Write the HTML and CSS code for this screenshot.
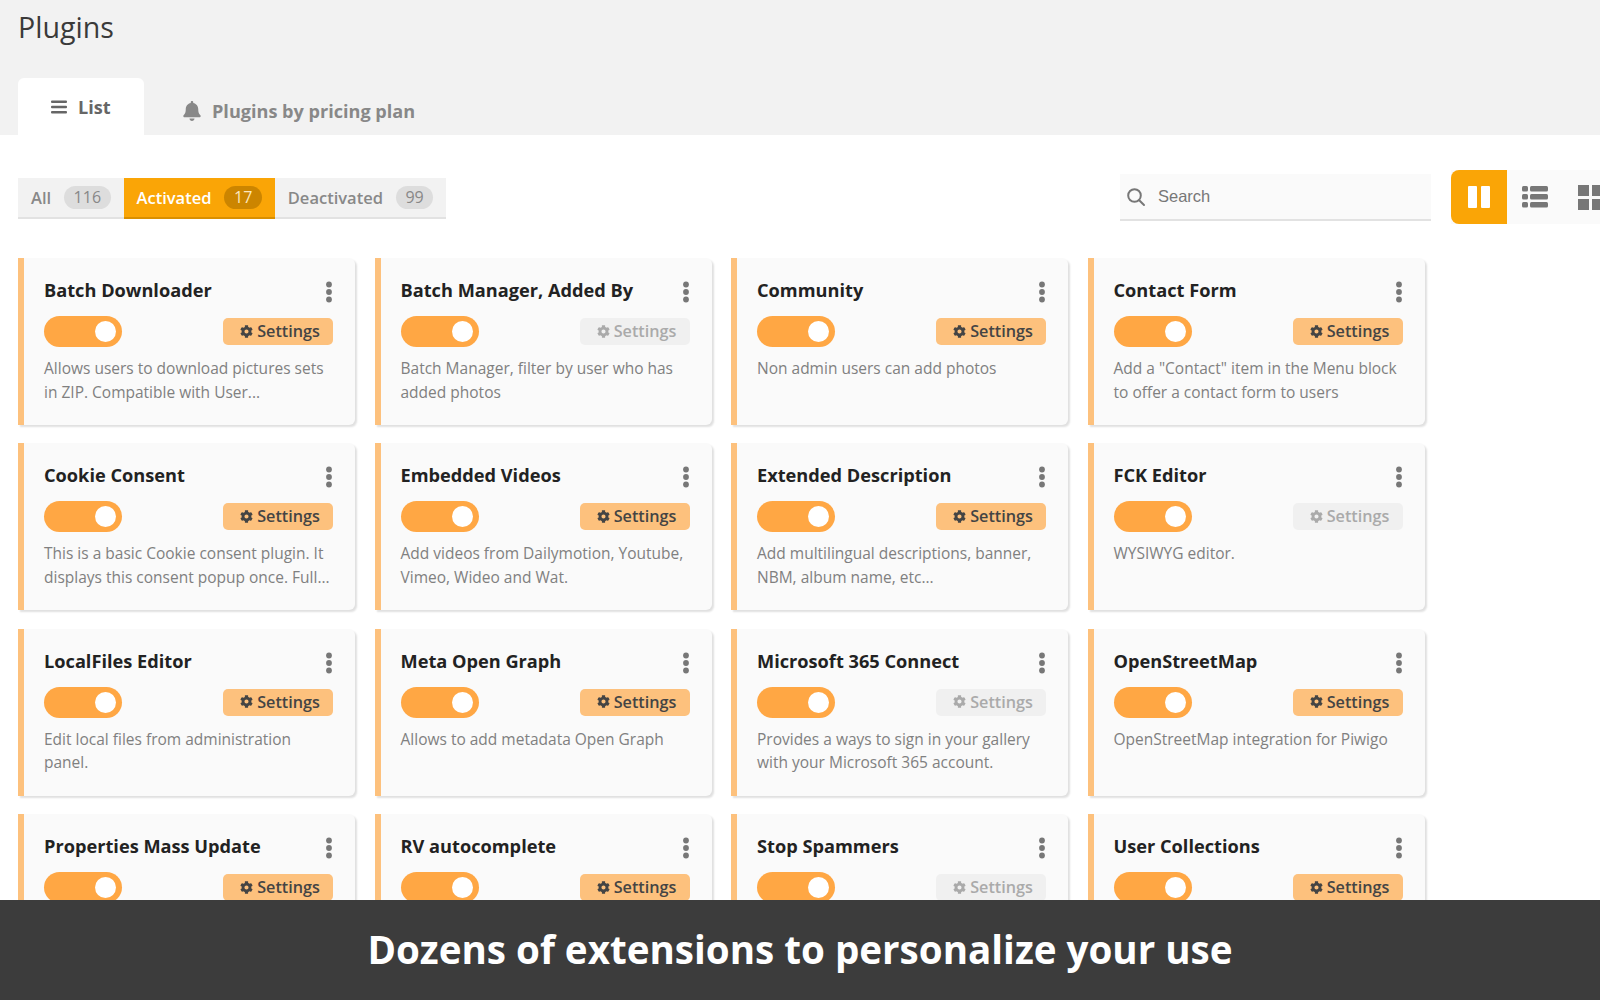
FILE: index.html
```html
<!DOCTYPE html>
<html lang="en">
<head>
  <meta charset="UTF-8">
  <meta name="viewport" content="width=device-width, initial-scale=1.0">
  <title>Plugins</title>
  <link rel="stylesheet" href="styles.css">
</head>
<body>
  <svg class="icon-defs" width="0" height="0">
    <symbol id="gear" viewBox="0 0 512 512"><path d="M487.4 315.7l-42.6-24.6c4.3-23.2 4.3-47 0-70.2l42.6-24.6c4.9-2.8 7.1-8.6 5.5-14-11.1-35.6-30-67.8-54.7-94.6-3.8-4.1-10-5.1-14.8-2.3L380.8 110c-17.9-15.4-38.5-27.3-60.8-35.1V25.8c0-5.6-3.9-10.5-9.4-11.7-36.7-8.2-74.3-7.8-109.2 0-5.5 1.2-9.4 6.1-9.4 11.7V75c-22.2 7.9-42.8 19.8-60.8 35.1L88.7 85.5c-4.9-2.8-11-1.9-14.8 2.3-24.7 26.7-43.6 58.9-54.7 94.6-1.7 5.4.6 11.2 5.5 14L67.3 221c-4.3 23.2-4.3 47 0 70.2l-42.6 24.6c-4.9 2.8-7.1 8.6-5.5 14 11.1 35.6 30 67.8 54.7 94.6 3.8 4.1 10 5.1 14.8 2.3l42.6-24.6c17.9 15.4 38.5 27.3 60.8 35.1v49.2c0 5.6 3.9 10.5 9.4 11.7 36.7 8.2 74.3 7.8 109.2 0 5.5-1.2 9.4-6.1 9.4-11.7v-49.2c22.2-7.9 42.8-19.8 60.8-35.1l42.6 24.6c4.9 2.8 11 1.9 14.8-2.3 24.7-26.7 43.6-58.9 54.7-94.6 1.5-5.5-.7-11.3-5.6-14.1zM256 336c-44.1 0-80-35.9-80-80s35.9-80 80-80 80 35.9 80 80-35.9 80-80 80z"/></symbol>
    <symbol id="dots" viewBox="0 0 8 22"><circle cx="4" cy="3.5" r="2.9"/><circle cx="4" cy="11" r="2.9"/><circle cx="4" cy="18.5" r="2.9"/></symbol>
  </svg>

  <header class="page-head">
    <h1>Plugins</h1>
    <nav class="tabs">
      <a class="tab tab-active">
        <svg class="tab-icon" viewBox="0 0 16 14"><rect y="0.5" width="16" height="2.4" rx="1"/><rect y="5.8" width="16" height="2.4" rx="1"/><rect y="11.1" width="16" height="2.4" rx="1"/></svg>
        List
      </a>
      <a class="tab">
        <svg class="tab-icon bell" viewBox="0 0 448 512"><path d="M224 512c35.32 0 63.97-28.65 63.97-64H160.03c0 35.35 28.65 64 63.97 64zm215.39-149.71c-19.32-20.76-55.47-51.99-55.47-154.29 0-77.7-54.48-139.9-127.94-155.16V32c0-17.67-14.32-32-31.98-32s-31.98 14.33-31.98 32v20.84C118.56 68.1 64.08 130.3 64.08 208c0 102.3-36.15 133.53-55.47 154.29-6 6.45-8.66 14.16-8.61 21.71.11 16.4 12.98 32 32.1 32h383.8c19.12 0 32-15.6 32.1-32 .05-7.55-2.61-15.27-8.61-21.71z"/></svg>
        Plugins by pricing plan
      </a>
    </nav>
  </header>

  <main class="content">
    <div class="toolbar">
      <div class="filters">
        <a class="filter">All <span class="count">116</span></a>
        <a class="filter filter-active">Activated <span class="count">17</span></a>
        <a class="filter">Deactivated <span class="count">99</span></a>
      </div>
      <label class="search">
        <svg class="search-icon" viewBox="0 0 20 20"><circle cx="8.5" cy="8.5" r="6.3"/><line x1="13.2" y1="13.2" x2="18" y2="18"/></svg>
        <input type="text" placeholder="Search">
      </label>
      <div class="views">
        <a class="view view-active">
          <svg viewBox="0 0 22 22" width="22" height="22"><rect width="9" height="22" rx="1"/><rect x="13" width="9" height="22" rx="1"/></svg>
        </a>
        <a class="view">
          <svg viewBox="0 0 26 22" width="26" height="22"><rect width="6" height="5.6" rx="1.5"/><rect x="8" width="18" height="5.6" rx="1.5"/><rect y="8" width="6" height="5.6" rx="1.5"/><rect x="8" y="8" width="18" height="5.6" rx="1.5"/><rect y="16" width="6" height="5.6" rx="1.5"/><rect x="8" y="16" width="18" height="5.6" rx="1.5"/></svg>
        </a>
        <a class="view view-grid">
          <svg viewBox="0 0 25 25" width="25" height="25"><rect width="11" height="11"/><rect x="14" width="11" height="11"/><rect y="14" width="11" height="11"/><rect x="14" y="14" width="11" height="11"/></svg>
        </a>
      </div>
    </div>

    <div class="plugins">
      <article class="card">
        <div class="card-top"><h2>Batch Downloader</h2><svg class="dots"><use href="#dots"/></svg></div>
        <div class="card-row"><span class="toggle"></span><a class="settings"><svg class="gear"><use href="#gear"/></svg>Settings</a></div>
        <p>Allows users to download pictures sets in ZIP. Compatible with User...</p>
      </article>
      <article class="card">
        <div class="card-top"><h2>Batch Manager, Added By</h2><svg class="dots"><use href="#dots"/></svg></div>
        <div class="card-row"><span class="toggle"></span><a class="settings settings-off"><svg class="gear"><use href="#gear"/></svg>Settings</a></div>
        <p>Batch Manager, filter by user who has added photos</p>
      </article>
      <article class="card">
        <div class="card-top"><h2>Community</h2><svg class="dots"><use href="#dots"/></svg></div>
        <div class="card-row"><span class="toggle"></span><a class="settings"><svg class="gear"><use href="#gear"/></svg>Settings</a></div>
        <p>Non admin users can add photos</p>
      </article>
      <article class="card">
        <div class="card-top"><h2>Contact Form</h2><svg class="dots"><use href="#dots"/></svg></div>
        <div class="card-row"><span class="toggle"></span><a class="settings"><svg class="gear"><use href="#gear"/></svg>Settings</a></div>
        <p>Add a "Contact" item in the Menu block to offer a contact form to users</p>
      </article>

      <article class="card">
        <div class="card-top"><h2>Cookie Consent</h2><svg class="dots"><use href="#dots"/></svg></div>
        <div class="card-row"><span class="toggle"></span><a class="settings"><svg class="gear"><use href="#gear"/></svg>Settings</a></div>
        <p>This is a basic Cookie consent plugin. It displays this consent popup once. Full...</p>
      </article>
      <article class="card">
        <div class="card-top"><h2>Embedded Videos</h2><svg class="dots"><use href="#dots"/></svg></div>
        <div class="card-row"><span class="toggle"></span><a class="settings"><svg class="gear"><use href="#gear"/></svg>Settings</a></div>
        <p>Add videos from Dailymotion, Youtube, Vimeo, Wideo and Wat.</p>
      </article>
      <article class="card">
        <div class="card-top"><h2>Extended Description</h2><svg class="dots"><use href="#dots"/></svg></div>
        <div class="card-row"><span class="toggle"></span><a class="settings"><svg class="gear"><use href="#gear"/></svg>Settings</a></div>
        <p>Add multilingual descriptions, banner, NBM, album name, etc...</p>
      </article>
      <article class="card">
        <div class="card-top"><h2>FCK Editor</h2><svg class="dots"><use href="#dots"/></svg></div>
        <div class="card-row"><span class="toggle"></span><a class="settings settings-off"><svg class="gear"><use href="#gear"/></svg>Settings</a></div>
        <p>WYSIWYG editor.</p>
      </article>

      <article class="card">
        <div class="card-top"><h2>LocalFiles Editor</h2><svg class="dots"><use href="#dots"/></svg></div>
        <div class="card-row"><span class="toggle"></span><a class="settings"><svg class="gear"><use href="#gear"/></svg>Settings</a></div>
        <p>Edit local files from administration panel.</p>
      </article>
      <article class="card">
        <div class="card-top"><h2>Meta Open Graph</h2><svg class="dots"><use href="#dots"/></svg></div>
        <div class="card-row"><span class="toggle"></span><a class="settings"><svg class="gear"><use href="#gear"/></svg>Settings</a></div>
        <p>Allows to add metadata Open Graph</p>
      </article>
      <article class="card">
        <div class="card-top"><h2>Microsoft 365 Connect</h2><svg class="dots"><use href="#dots"/></svg></div>
        <div class="card-row"><span class="toggle"></span><a class="settings settings-off"><svg class="gear"><use href="#gear"/></svg>Settings</a></div>
        <p>Provides a ways to sign in your gallery with your Microsoft 365 account.</p>
      </article>
      <article class="card">
        <div class="card-top"><h2>OpenStreetMap</h2><svg class="dots"><use href="#dots"/></svg></div>
        <div class="card-row"><span class="toggle"></span><a class="settings"><svg class="gear"><use href="#gear"/></svg>Settings</a></div>
        <p>OpenStreetMap integration for Piwigo</p>
      </article>

      <article class="card">
        <div class="card-top"><h2>Properties Mass Update</h2><svg class="dots"><use href="#dots"/></svg></div>
        <div class="card-row"><span class="toggle"></span><a class="settings"><svg class="gear"><use href="#gear"/></svg>Settings</a></div>
      </article>
      <article class="card">
        <div class="card-top"><h2>RV autocomplete</h2><svg class="dots"><use href="#dots"/></svg></div>
        <div class="card-row"><span class="toggle"></span><a class="settings"><svg class="gear"><use href="#gear"/></svg>Settings</a></div>
      </article>
      <article class="card">
        <div class="card-top"><h2>Stop Spammers</h2><svg class="dots"><use href="#dots"/></svg></div>
        <div class="card-row"><span class="toggle"></span><a class="settings settings-off"><svg class="gear"><use href="#gear"/></svg>Settings</a></div>
      </article>
      <article class="card">
        <div class="card-top"><h2>User Collections</h2><svg class="dots"><use href="#dots"/></svg></div>
        <div class="card-row"><span class="toggle"></span><a class="settings"><svg class="gear"><use href="#gear"/></svg>Settings</a></div>
      </article>
    </div>
  </main>

  <footer class="caption">Dozens of extensions to personalize your use</footer>
</body>
</html>
```

FILE: styles.css
```css
* {
  box-sizing: border-box;
}

body {
  margin: 0;
  height: 1000px;
  display: flex;
  flex-direction: column;
  overflow: hidden;
  background: #fff;
  font-family: 'Open Sans', sans-serif;
}

.icon-defs {
  position: absolute;
}

/* Page head with tabs */
.page-head {
  height: 135px;
  flex: none;
  padding: 0 18px;
  background: #f2f2f2;
  display: flex;
  flex-direction: column;
  justify-content: space-between;
}

.page-head h1 {
  margin: 7px 0 0;
  font-size: 28.6px;
  line-height: 40px;
  font-weight: 400;
  color: #3a3a3a;
}

.tabs {
  display: flex;
  height: 57px;
}

.tab {
  display: flex;
  align-items: center;
  gap: 11px;
  padding: 8px 37px 0 39px;
  font-size: 18.1px;
  font-weight: 700;
  color: #888;
  white-space: nowrap;
}

.tab-active {
  width: 126px;
  padding: 0 0 0 33px;
  background: #fff;
  border-radius: 6px 6px 0 0;
  color: #666;
}

.tab-icon {
  width: 16px;
  height: 14px;
  fill: #666;
}

.bell {
  width: 18px;
  height: 20px;
  fill: #888;
}

/* Toolbar */
.content {
  flex: 1;
  min-height: 0;
  overflow: hidden;
  padding: 35px 0 0 18px;
}

.toolbar {
  display: flex;
  align-items: center;
  height: 54px;
}

.filters {
  display: flex;
  height: 41px;
  margin-top: 2px;
  background: #f2f2f2;
  border-bottom: 2px solid #e2e2e2;
}

.filter {
  display: flex;
  align-items: center;
  gap: 13px;
  padding: 0 13px;
  font-size: 16.5px;
  font-weight: 600;
  color: #888;
}

.count {
  min-width: 36px;
  height: 23px;
  padding: 0 9.5px;
  border-radius: 12px;
  background: #ddd;
  font-weight: 400;
  font-size: 16px;
  line-height: 23px;
  text-align: center;
}

.filter-active {
  height: 41px;
  background: #faa506;
  border-bottom: 2px solid #d98f00;
  color: #fff;
}

.filter-active .count {
  background: #cc8500;
  color: #fde7bd;
}

.search {
  display: flex;
  align-items: center;
  width: 311px;
  height: 47px;
  margin: 1px 20px 0 auto;
  padding-left: 6px;
  background: #fafafa;
  border-bottom: 2px solid #e2e2e2;
}

.search-icon {
  width: 20px;
  height: 20px;
  flex: none;
  fill: none;
  stroke: #777;
  stroke-width: 2;
  stroke-linecap: round;
}

.search input {
  flex: 1;
  min-width: 0;
  margin-left: 10px;
  border: none;
  outline: none;
  background: transparent;
  font-family: 'Liberation Sans', sans-serif;
  font-size: 16.5px;
  color: #777;
}

.search input::placeholder {
  color: #777;
  opacity: 1;
}

.views {
  display: flex;
  flex: 0 0 149px;
  height: 54px;
  overflow: hidden;
  background: #fafafa;
}

.view {
  display: flex;
  align-items: center;
  justify-content: center;
  flex: 0 0 56px;
  fill: #777;
}

.view-active {
  background: #faa506;
  border-radius: 8px 0 0 8px;
  fill: #fff;
}

.view-grid {
  padding-right: 2px;
}

/* Plugin cards */
.plugins {
  display: grid;
  grid-template-columns: repeat(4, 337px);
  grid-auto-rows: 167px;
  gap: 18.4px 19.5px;
  margin-top: 34px;
}

.card {
  padding: 20px 22px 0 20px;
  background: #fafafa;
  border-left: 6px solid #fdc17d;
  border-radius: 0 6px 6px 0;
  box-shadow: 2px 2px 2px #e0e0e0;
}

.card-top {
  display: flex;
  justify-content: space-between;
  align-items: flex-start;
  height: 38px;
}

.card h2 {
  margin: 0;
  font-size: 18.2px;
  line-height: 24px;
  font-weight: 700;
  color: #222;
}

.dots {
  width: 8px;
  height: 22px;
  margin-top: 3px;
  fill: #777;
}

.card-row {
  display: flex;
  justify-content: space-between;
  align-items: center;
  height: 31px;
}

.toggle {
  position: relative;
  width: 78px;
  height: 31px;
  border-radius: 16px;
  background: #ffa744;
}

/* knob sits on top of the track */
.toggle::after {
  content: "";
  position: absolute;
  top: 5px;
  right: 6px;
  width: 21px;
  height: 21px;
  border-radius: 50%;
  background: #fff;
}

.settings {
  display: flex;
  align-items: center;
  justify-content: center;
  gap: 4px;
  width: 110px;
  height: 27px;
  padding: 0 0 1px 4px;
  border-radius: 5px;
  background: #fdc17d;
  font-size: 16.2px;
  font-weight: 600;
  color: #444;
}

.settings-off {
  background: #f0f0f0;
  color: #aaa;
}

.gear {
  width: 13px;
  height: 13px;
  fill: currentColor;
}

.card p {
  margin: 10px 0 0;
  font-size: 15.5px;
  line-height: 23.5px;
  color: #808080;
}

/* Caption bar */
.caption {
  flex: none;
  height: 100px;
  padding-bottom: 2px;
  background: #3c3c3c;
  color: #fff;
  font-size: 38.6px;
  font-weight: 700;
  line-height: 98px;
  text-align: center;
}
```
